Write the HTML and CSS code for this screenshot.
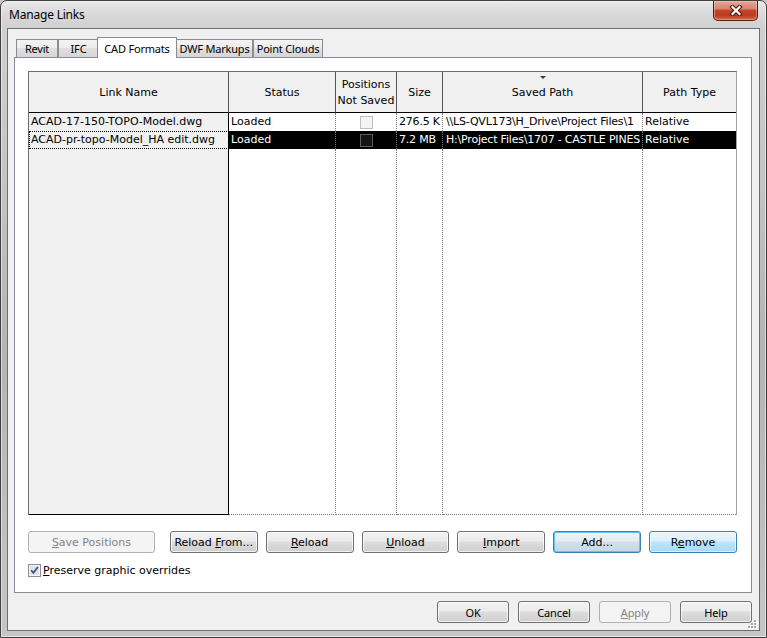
FILE: index.html
```html
<!DOCTYPE html>
<html lang="en">
<head>
<meta charset="utf-8">
<title>Manage Links</title>
<link rel="stylesheet" href="styles.css">
</head>
<body>
<div class="window">
  <div class="titlebar">
    <span class="title">Manage Links</span>
    <button class="close" type="button" aria-label="Close">
      <svg width="14" height="11" viewBox="0 0 14 11">
        <path d="M3.5 2 L10.5 9 M10.5 2 L3.5 9" stroke="#4b1d14" stroke-width="4.4" stroke-linecap="square" fill="none"/>
        <path d="M3.5 2 L10.5 9 M10.5 2 L3.5 9" stroke="#ffffff" stroke-width="2.2" stroke-linecap="square" fill="none"/>
      </svg>
    </button>
  </div>

  <div class="client">
    <div class="tabs">
      <div class="tab t-revit">Revit</div>
      <div class="tab t-ifc">IFC</div>
      <div class="tab t-cad active">CAD Formats</div>
      <div class="tab t-dwf">DWF Markups</div>
      <div class="tab t-pc">Point Clouds</div>
    </div>

    <div class="panel">
      <div class="grid">
        <table class="links">
          <colgroup>
            <col class="c-name"><col class="c-status"><col class="c-pos"><col class="c-size"><col class="c-path"><col class="c-type">
          </colgroup>
          <thead>
            <tr class="head">
              <th>Link Name</th>
              <th>Status</th>
              <th>Positions<br>Not Saved</th>
              <th>Size</th>
              <th class="sorted"><span class="sort"></span>Saved Path</th>
              <th>Path Type</th>
            </tr>
          </thead>
          <tbody>
            <tr class="row">
              <td class="name">ACAD-17-150-TOPO-Model.dwg</td>
              <td>Loaded</td>
              <td class="pos"><span class="cb"></span></td>
              <td class="size">276.5 K</td>
              <td class="path">\\LS-QVL173\H_Drive\Project Files\1</td>
              <td>Relative</td>
            </tr>
            <tr class="row sel">
              <td class="name">ACAD-pr-topo-Model_HA edit.dwg</td>
              <td>Loaded</td>
              <td class="pos"><span class="cb"></span></td>
              <td class="size">7.2 MB</td>
              <td class="path">H:\Project Files\1707 - CASTLE PINES</td>
              <td>Relative</td>
            </tr>
            <tr class="filler">
              <td class="name"></td><td></td><td></td><td></td><td></td><td></td>
            </tr>
          </tbody>
        </table>
      </div>

      <div class="actions">
        <button class="btn w-save" type="button" disabled><u>S</u>ave Positions</button>
        <button class="btn" type="button">Reload <u>F</u>rom...</button>
        <button class="btn" type="button"><u>R</u>eload</button>
        <button class="btn" type="button"><u>U</u>nload</button>
        <button class="btn" type="button"><u>I</u>mport</button>
        <button class="btn default" type="button">Add...</button>
        <button class="btn hover" type="button">R<u>e</u>move</button>
      </div>

      <label class="opt">
        <span class="check">
          <svg width="13" height="13" viewBox="0 0 13 13">
            <rect x="0.5" y="0.5" width="12" height="12" fill="#f4f4f4" stroke="#8e8f8f"/>
            <rect x="2" y="2" width="9" height="9" fill="#dfe3ea"/>
            <path d="M3.2 6.2 L5.4 8.8 L9.9 2.9" stroke="#34508a" stroke-width="1.7" fill="none"/>
          </svg>
        </span>
        <span><u>P</u>reserve graphic overrides</span>
      </label>
    </div>

    <div class="footer">
      <button class="btn fbtn" type="button">OK</button>
      <button class="btn fbtn" type="button">Cancel</button>
      <button class="btn fbtn" type="button" disabled><u>A</u>pply</button>
      <button class="btn fbtn" type="button">Help</button>
    </div>

    <svg class="grip" width="10" height="10" viewBox="0 0 10 10">
      <g fill="#ffffff"><rect x="8" y="2" width="2" height="2"/><rect x="5" y="5" width="2" height="2"/><rect x="8" y="5" width="2" height="2"/><rect x="2" y="8" width="2" height="2"/><rect x="5" y="8" width="2" height="2"/><rect x="8" y="8" width="2" height="2"/></g>
      <g fill="#a9a9a9"><rect x="7" y="1" width="2" height="2"/><rect x="4" y="4" width="2" height="2"/><rect x="7" y="4" width="2" height="2"/><rect x="1" y="7" width="2" height="2"/><rect x="4" y="7" width="2" height="2"/><rect x="7" y="7" width="2" height="2"/></g>
    </svg>
  </div>
</div>
</body>
</html>
```

FILE: styles.css
```css
* { box-sizing: border-box; }

html, body {
  margin: 0;
  padding: 0;
}

body {
  width: 767px;
  height: 638px;
  overflow: hidden;
  background: #c9c9c9;
  font-family: "DejaVu Sans", sans-serif;
  font-size: 11px;
  color: #000;
}

/* ---- window frame ---- */
.window {
  width: 767px;
  height: 638px;
  display: flex;
  flex-direction: column;
  padding: 0 6px 6px;
  border: 1px solid #404040;
  border-radius: 7px 7px 0 0;
  background: linear-gradient(180deg, #e9e9e9 0, #dadada 12px, #d0d0d0 27px, #c3c3c3 30%, #b4b4b4 55%, #c6c6c6 100%);
  box-shadow: inset 0 0 0 1px rgba(255, 255, 255, 0.5);
}

.titlebar {
  height: 27px;
  margin: 0 -6px;
  display: flex;
  align-items: flex-start;
}

.title {
  padding: 6px 0 0 8px;
  font-family: "Noto Sans", sans-serif;
  font-size: 12px;
  line-height: 16px;
  letter-spacing: -0.2px;
  color: #000;
}

.close {
  margin-left: auto;
  margin-right: 8px;
  width: 45px;
  height: 20px;
  padding: 0;
  border: 1px solid #4a1c14;
  border-top: none;
  border-radius: 0 0 5px 5px;
  background: linear-gradient(180deg, #e6a797 0, #d88670 40%, #c44329 50%, #bf3b22 75%, #d6674a 100%);
  box-shadow: inset 0 0 0 1px rgba(255, 210, 190, 0.45);
  display: flex;
  align-items: center;
  justify-content: center;
}

/* ---- dialog body ---- */
.client {
  flex: 1;
  position: relative;
  display: flex;
  flex-direction: column;
  padding: 8px 7px 7px 6px;
  border: 1px solid #6f6f6f;
  background: #f0f0f0;
}

/* ---- tab strip ---- */
.tabs {
  height: 20px;
  margin-left: 2px;
  display: flex;
  align-items: flex-end;
  position: relative;
  z-index: 1;
}

.tab {
  height: 18px;
  border: 1px solid #898c95;
  border-bottom: none;
  display: flex;
  align-items: center;
  justify-content: center;
  background: linear-gradient(180deg, #f3f3f3 0, #ececec 45%, #dfdfdf 50%, #d6d6d6 100%);
  font-family: "Noto Sans", sans-serif;
  font-size: 11px;
  letter-spacing: -0.2px;
  color: #000;
}

.t-revit { width: 42px; }
.t-ifc { width: 41px; }
.t-dwf { width: 77px; }
.t-pc { width: 70px; }

.tab.active {
  width: 80px;
  height: 21px;
  margin: 0 -1px -1px -2px;
  background: #fff;
  position: relative;
  z-index: 2;
}

/* ---- tab page ---- */
.panel {
  flex: 1;
  display: flex;
  flex-direction: column;
  padding: 13px 14px 15px 13px;
  border: 1px solid #898c95;
  background: #fff;
}

.grid {
  height: 444px;
  border-top: 1px solid #6d6d6d;
  border-left: 1px solid #6d6d6d;
  border-right: 1px solid #a0a0a0;
  background: #fff;
}

.links {
  width: 707px;
  table-layout: fixed;
  border-collapse: separate;
  border-spacing: 0;
  font-size: 11px;
}

.c-name { width: 200px; }
.c-status { width: 107px; }
.c-pos { width: 61px; }
.c-size { width: 46px; }
.c-path { width: 200px; }
.c-type { width: 93px; }

.head { height: 41px; }
.row { height: 18px; }
.filler { height: 366px; }

th {
  padding: 1px 0 0;
  font-weight: normal;
  line-height: 16px;
  text-align: center;
  vertical-align: middle;
  background: #f0f0f0;
  border-right: 1px solid #555;
  border-bottom: 1px solid #000;
}

th:last-child { border-right: none; }

th.sorted { position: relative; }

.sort {
  position: absolute;
  top: 4px;
  left: 50%;
  margin-left: -3px;
  width: 0;
  height: 0;
  border-left: 3px solid transparent;
  border-right: 3px solid transparent;
  border-top: 3px solid #3a3a3a;
}

td {
  padding: 0 2px;
  line-height: 16px;
  white-space: nowrap;
  overflow: hidden;
  vertical-align: middle;
  border-right: 1px dotted #7a7a7a;
}

td:last-child { border-right: none; }

td.name {
  background: #f0f0f0;
  border-right: 1px solid #000;
}

td.size { letter-spacing: -0.2px; }

td.path {
  padding-left: 3px;
  letter-spacing: -0.2px;
}

td.pos {
  padding: 0;
  text-align: center;
}

.cb {
  display: inline-block;
  width: 13px;
  height: 13px;
  vertical-align: middle;
  border: 1px solid #bdbdbd;
  background: #f4f4f4;
}

.sel td {
  background: #000;
  color: #fff;
}

.sel td.name {
  background: #f0f0f0;
  color: #000;
  outline: 1px dotted #000;
  outline-offset: -1px;
}

.sel .cb {
  border-color: #5c5c5c;
  background: #141414;
}

.filler td { border-bottom: 1px dotted #7a7a7a; }
.filler td.name { border-bottom: 1px solid #000; }

/* ---- buttons ---- */
.btn {
  display: block;
  width: 88px;
  height: 22px;
  padding: 0;
  border: 1px solid #707070;
  border-radius: 3px;
  background: linear-gradient(180deg, #f2f2f2 0, #ebebeb 45%, #dddddd 50%, #cfcfcf 100%);
  box-shadow: inset 0 0 0 1px rgba(255, 255, 255, 0.7);
  font-family: "DejaVu Sans", sans-serif;
  font-size: 11px;
  line-height: 19px;
  text-align: center;
  white-space: nowrap;
  color: #000;
}

.btn:disabled {
  border-color: #adb2b5;
  background: #f4f4f4;
  box-shadow: none;
  color: #838383;
}

.btn.default {
  border-color: #3c7fb1;
  background: linear-gradient(180deg, #eef4f8 0, #e3ecf2 45%, #d3e0ea 50%, #c7d8e5 100%);
  box-shadow: inset 0 0 0 1px #5ec6f2;
}

.btn.hover {
  border-color: #3c7fb1;
  background: linear-gradient(180deg, #eaf6fd 0, #d9f0fc 45%, #bee6fd 50%, #a7d9f5 100%);
  box-shadow: inset 0 0 0 1px rgba(255, 255, 255, 0.6);
}

.actions {
  display: flex;
  gap: 8px;
  margin-top: 16px;
}

.actions .w-save {
  width: 127px;
  margin-right: 7px;
}

.opt {
  height: 14px;
  margin-top: 10px;
  display: flex;
  align-items: center;
  gap: 2px;
  font-size: 11px;
}

.check {
  display: flex;
  width: 13px;
  height: 13px;
}

.footer {
  display: flex;
  justify-content: flex-end;
  gap: 9px;
  margin-top: 8px;
}

.fbtn {
  width: 72px;
  font-family: "Noto Sans", sans-serif;
  letter-spacing: -0.1px;
}

.grip {
  position: absolute;
  right: 2px;
  bottom: 1px;
}
```
